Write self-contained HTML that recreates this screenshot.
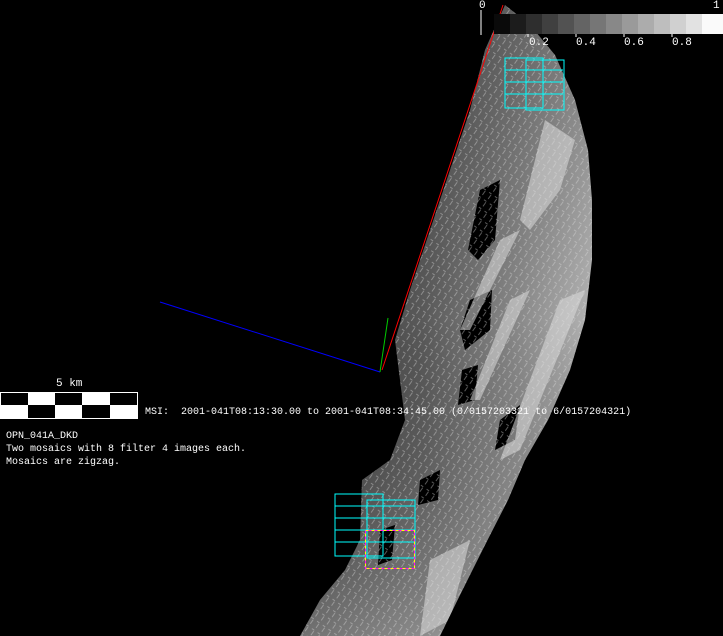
<!DOCTYPE html>
<html><head><style>
html,body{margin:0;padding:0;background:#000;}
body{width:723px;height:636px;overflow:hidden;position:relative;font-family:"Liberation Mono",monospace;color:#fff;}
.t{position:absolute;font-size:10px;line-height:13px;white-space:pre;}
</style></head><body>
<svg width="723" height="636" style="position:absolute;left:0;top:0">
<defs>
<linearGradient id="g" x1="0" y1="0" x2="1" y2="0">
<stop offset="0" stop-color="#2e2e2e"/><stop offset="0.45" stop-color="#5a5a5a"/><stop offset="0.75" stop-color="#8a8a8a"/><stop offset="1" stop-color="#b8b8b8"/>
</linearGradient>
<linearGradient id="g2" x1="0" y1="0" x2="0" y2="1">
<stop offset="0" stop-color="#000" stop-opacity="0.3"/><stop offset="0.5" stop-color="#000" stop-opacity="0"/><stop offset="1" stop-color="#fff" stop-opacity="0.3"/>
</linearGradient>
<pattern id="p" width="9" height="7" patternUnits="userSpaceOnUse" patternTransform="rotate(-55)">
<path d="M0 3h5M6 0v3" stroke="#ddd" stroke-width="1"/>
</pattern>
<clipPath id="c"><polygon points="505,5 530,25 555,55 575,100 588,150 592,200 592,260 585,320 570,370 548,420 525,460 508,500 485,545 460,595 440,636 300,636 320,600 345,570 360,540 362,480 390,460 405,420 395,340 410,290 430,230 450,170 470,110 485,50"/></clipPath>
</defs>
<g clip-path="url(#c)">
<rect x="280" y="0" width="320" height="636" fill="url(#g)"/>
<rect x="280" y="0" width="320" height="636" fill="url(#g2)"/>
<g fill="#000">
<polygon points="480,190 500,180 495,240 478,260 468,250"/>
<polygon points="470,300 492,290 490,330 465,350 460,330"/>
<polygon points="462,370 478,365 475,400 458,405"/>
<polygon points="500,420 520,405 515,440 495,450"/>
<polygon points="420,480 440,470 438,500 418,505"/>
<polygon points="380,530 395,525 392,560 378,565"/>
</g>
<g fill="#ddd" opacity="0.55">
<polygon points="545,120 575,140 560,190 530,230 520,220"/>
<polygon points="500,240 520,230 470,330 460,330"/>
<polygon points="510,300 530,290 480,400 470,400"/>
<polygon points="560,300 585,290 520,450 500,460"/>
<polygon points="430,560 470,540 450,620 420,636"/>
</g>
<rect x="280" y="0" width="320" height="636" fill="url(#p)" opacity="0.4"/>
</g>
<line x1="503" y1="5" x2="382" y2="370" stroke="#f00" stroke-width="1"/>
<line x1="160" y1="302" x2="380" y2="372" stroke="#00f" stroke-width="1"/>
<line x1="380" y1="372" x2="388" y2="318" stroke="#0c0" stroke-width="1"/>
<g stroke="#0ff" fill="none" stroke-width="1">
<rect x="505" y="58" width="38" height="50"/>
<rect x="526" y="60" width="38" height="50"/>
<line x1="505" y1="70" x2="563" y2="70"/><line x1="505" y1="82" x2="563" y2="82"/><line x1="505" y1="94" x2="563" y2="94"/>
<rect x="335" y="494" width="48" height="62"/>
<rect x="367" y="500" width="48" height="58"/>
<line x1="335" y1="506" x2="415" y2="506"/><line x1="335" y1="518" x2="415" y2="518"/><line x1="335" y1="530" x2="415" y2="530"/><line x1="335" y1="542" x2="415" y2="542"/>
</g>
<rect x="365.5" y="530.5" width="49" height="38" fill="none" stroke="#ff0" stroke-dasharray="3,3"/>
<rect x="365.5" y="530.5" width="49" height="38" fill="none" stroke="#f0f" stroke-dasharray="3,3" stroke-dashoffset="3"/>
<g>
<rect x="494" y="14" width="16" height="20" fill="#0a0a0a"/>
<rect x="510" y="14" width="16" height="20" fill="#1c1c1c"/>
<rect x="526" y="14" width="16" height="20" fill="#2e2e2e"/>
<rect x="542" y="14" width="16" height="20" fill="#404040"/>
<rect x="558" y="14" width="16" height="20" fill="#525252"/>
<rect x="574" y="14" width="16" height="20" fill="#646464"/>
<rect x="590" y="14" width="16" height="20" fill="#767676"/>
<rect x="606" y="14" width="16" height="20" fill="#888"/>
<rect x="622" y="14" width="16" height="20" fill="#9a9a9a"/>
<rect x="638" y="14" width="16" height="20" fill="#acacac"/>
<rect x="654" y="14" width="16" height="20" fill="#bebebe"/>
<rect x="670" y="14" width="16" height="20" fill="#d0d0d0"/>
<rect x="686" y="14" width="16" height="20" fill="#e2e2e2"/>
<rect x="702" y="14" width="21" height="20" fill="#fafafa"/>
<path d="M481 10v25M528 34v3M576 34v3M624 34v3M672 34v3" stroke="#fff"/>
</g>
<rect x="0.5" y="392.5" width="137" height="26" fill="#fff" stroke="#fff"/>
<g fill="#000">
<rect x="1" y="393" width="27" height="12"/><rect x="55" y="393" width="27" height="12"/><rect x="110" y="393" width="27" height="12"/>
<rect x="28" y="405" width="27" height="13"/><rect x="82" y="405" width="28" height="13"/>
</g>
</svg>
<div class="t" style="left:479px;top:0px;font-size:11px">0</div>
<div class="t" style="left:713px;top:0px;font-size:11px">1</div>
<div class="t" style="left:529px;top:37px;font-size:11px">0.2</div>
<div class="t" style="left:576px;top:37px;font-size:11px">0.4</div>
<div class="t" style="left:624px;top:37px;font-size:11px">0.6</div>
<div class="t" style="left:672px;top:37px;font-size:11px">0.8</div>
<div class="t" style="left:56px;top:378px;font-size:11px">5 km</div>
<div class="t" style="left:145px;top:406px">MSI:  2001-041T08:13:30.00 to 2001-041T08:34:45.00 (0/0157203321 to 6/0157204321)</div>
<div class="t" style="left:6px;top:430px">OPN_041A_DKD
Two mosaics with 8 filter 4 images each.
Mosaics are zigzag.</div>
</body></html>
